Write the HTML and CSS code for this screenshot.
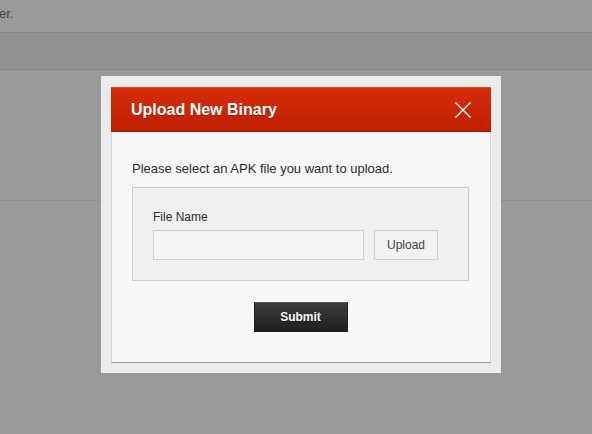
FILE: index.html
```html
<!DOCTYPE html>
<html>
<head>
<meta charset="utf-8">
<link rel="stylesheet" href="styles.css">
</head>
<body>
<div class="page">
  <div class="page-top"><span class="page-note">er.</span></div>
  <div class="page-band"></div>
  <div class="page-panel"></div>
  <div class="page-rest"></div>
</div>
<div class="modal">
  <div class="dialog">
    <div class="dialog-head">
      <h2 class="dialog-title">Upload New Binary</h2>
      <button class="dialog-close" aria-label="Close">
        <svg width="16" height="16" viewBox="0 0 16 16"><path d="M0.5 0.5 L15.5 15.5 M15.5 0.5 L0.5 15.5" stroke="#fff" stroke-width="1.4" fill="none"/></svg>
      </button>
    </div>
    <div class="dialog-body">
      <p class="intro">Please select an APK file you want to upload.</p>
      <div class="file-box">
        <div class="file-label">File Name</div>
        <div class="file-row">
          <input class="file-input" type="text">
          <button class="btn-upload">Upload</button>
        </div>
      </div>
      <div class="actions">
        <button class="btn-submit">Submit</button>
      </div>
    </div>
  </div>
</div>
</body>
</html>
```
FILE: styles.css
```css
html, body {
  margin: 0;
  padding: 0;
}
body {
  background: #999999;
  font-family: "Liberation Sans", Arial, sans-serif;
  width: 592px;
  height: 434px;
  overflow: hidden;
  position: relative;
}
.page-top {
  height: 32px;
  border-bottom: 1px solid #868686;
  background: #9a9a9a;
  box-sizing: content-box;
}
.page-note {
  display: block;
  margin-left: -1px;
  padding-top: 6px;
  font-size: 13px;
  line-height: 15px;
  color: #444;
}
.page-band {
  height: 36px;
  background: #929292;
  border-bottom: 1px solid #868686;
}
.page-panel {
  height: 130px;
  background: #999999;
  border-bottom: 1px dotted #858585;
}
.page-rest {
  height: 233px;
  background: #999999;
}
.modal {
  position: absolute;
  left: 101px;
  top: 76px;
  width: 400px;
  box-sizing: border-box;
  padding: 11px 10px 10px;
  background: #ebebeb;
}
.dialog {
  background: #f7f7f7;
}
.dialog-head {
  height: 45px;
  box-sizing: border-box;
  display: flex;
  align-items: center;
  justify-content: space-between;
  padding: 0 20px 0 20px;
  background: linear-gradient(#d62c0b, #bd2000);
  border-top: 1px solid #e0461f;
  border-bottom: 1px solid #a81c00;
}
.dialog-title {
  margin: 0;
  font-size: 16px;
  font-weight: bold;
  color: #fff;
  text-shadow: 0 1px 1px rgba(0,0,0,0.25);
  line-height: 18px;
  padding-top: 1px;
}
.dialog-close {
  width: 16px;
  height: 16px;
  padding: 0;
  border: 0;
  background: transparent;
  display: block;
  margin-top: 1px;
}
.dialog-close svg {
  display: block;
}
.dialog-body {
  border-left: 1px solid #d4d4d4;
  border-right: 1px solid #d4d4d4;
  border-bottom: 1px solid #9a9a9a;
  padding: 29px 21px 30px 20px;
}
.intro {
  margin: 0 0 11px;
  font-size: 13px;
  line-height: 15px;
  color: #2b2b2b;
}
.file-box {
  border: 1px solid #cccccc;
  background: #f0f0f0;
  padding: 22px 30px 20px 20px;
}
.file-label {
  font-size: 12px;
  line-height: 14px;
  color: #2b2b2b;
  margin-bottom: 6px;
}
.file-row {
  display: flex;
  gap: 10px;
}
.file-input {
  width: 211px;
  height: 30px;
  box-sizing: border-box;
  border: 1px solid #d0d0d0;
  background: #f4f4f4;
  margin: 0;
  padding: 0 6px;
}
.btn-upload {
  width: 64px;
  height: 30px;
  box-sizing: border-box;
  border: 1px solid #cfcfcf;
  background: #f2f2f2;
  font-family: "Liberation Sans", Arial, sans-serif;
  font-size: 12px;
  color: #444;
  margin: 0;
  padding: 0;
}
.actions {
  display: flex;
  justify-content: center;
  margin-top: 21px;
}
.btn-submit {
  width: 94px;
  height: 30px;
  box-sizing: border-box;
  border: 1px solid #222;
  border-top-color: #555;
  background: linear-gradient(#3d3d3d, #1f1f1f);
  color: #fff;
  font-family: "Liberation Sans", Arial, sans-serif;
  font-size: 12px;
  font-weight: bold;
  margin: 0;
  padding: 0;
  text-shadow: 0 1px 1px rgba(0,0,0,0.5);
}
```
